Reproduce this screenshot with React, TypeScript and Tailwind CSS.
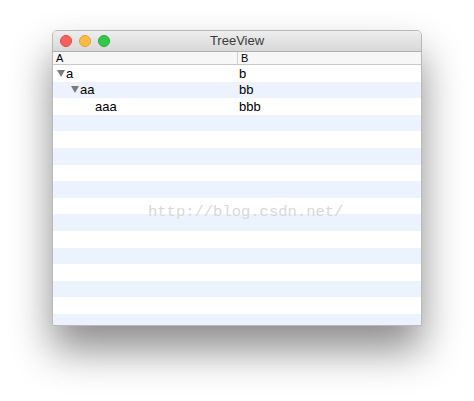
const rows = [
  { a: 'a', b: 'b', level: 0, open: true },
  { a: 'aa', b: 'bb', level: 1, open: true },
  { a: 'aaa', b: 'bbb', level: 2, open: false },
];

const Triangle = () => (
  <svg width="8" height="7" viewBox="0 0 8 7" className="shrink-0">
    <polygon points="0,0 8,0 4,7" fill="#7b7b7b" />
  </svg>
);

export default function App() {
  const stripes = Array.from({ length: 16 });
  return (
    <div
      className="w-[474px] h-[401px] bg-white pt-[30px] pl-[52px]"
      style={{ fontFamily: '"Liberation Sans", Arial, sans-serif' }}
    >
      <div className="relative w-[370px] h-[296px] flex flex-col overflow-hidden rounded-t-[5px] border border-[#b9b9b9] bg-white shadow-[0_24px_40px_rgba(0,0,0,0.45)]">
        {/* title bar */}
        <div className="relative h-[21px] flex items-center shrink-0 bg-gradient-to-b from-[#eeeeee] to-[#d8d8d8] border-b border-[#b0b0b0]">
          <div className="flex items-center gap-[7px] pl-[7px]">
            <span className="w-[12px] h-[12px] rounded-full bg-[#fc605c] border border-[#de4a46]" />
            <span className="w-[12px] h-[12px] rounded-full bg-[#fdbc40] border border-[#dea034]" />
            <span className="w-[12px] h-[12px] rounded-full bg-[#34c84a] border border-[#27aa35]" />
          </div>
          <div className="absolute inset-0 flex items-center justify-center text-[13px] text-[#3b3b3b]">
            TreeView
          </div>
        </div>
        {/* header */}
        <div className="h-[13px] flex shrink-0 bg-[#f7f7f7] border-b border-[#c8c8c8] text-[11px] leading-[13px] text-black">
          <div className="w-[185px] pl-[3px] border-r border-[#d0d0d0]">A</div>
          <div className="pl-[3px]">B</div>
        </div>
        {/* body */}
        <div className="relative flex-1">
          <div className="flex flex-col">
            {stripes.map((_, i) => (
              <div
                key={i}
                className={`h-[16.6px] shrink-0 ${i % 2 === 1 ? 'bg-[#edf3fe]' : 'bg-white'}`}
              />
            ))}
          </div>
          <div className="absolute inset-0 flex flex-col text-[13px] text-black">
            {rows.map((r, i) => (
              <div key={i} className="h-[16.6px] flex items-center shrink-0">
                <div className="w-[185px] flex items-center gap-[1px]" style={{ paddingLeft: 4 + r.level * 14 }}>
                  {r.open ? <Triangle /> : <span className="w-[9px]" />}
                  <span>{r.a}</span>
                </div>
                <div className="pl-[1px]">{r.b}</div>
              </div>
            ))}
          </div>
          <div
            className="absolute left-[95px] top-[136px] text-[15.5px] text-[#d8d8d8]"
            style={{ fontFamily: '"Liberation Mono", "DejaVu Sans Mono", monospace' }}
          >
            http://blog.csdn.net/
          </div>
        </div>
      </div>
    </div>
  );
}
